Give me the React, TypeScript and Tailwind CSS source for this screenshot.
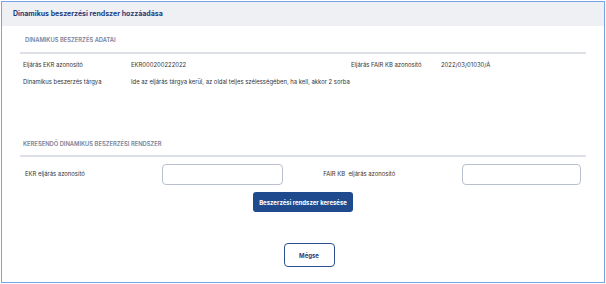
import React from 'react';

const font = { fontFamily: 'Inter, "Noto Sans", sans-serif' };

const App: React.FC = () => {
  return (
    <div className="w-[606px] h-[284px] bg-white p-px" style={font}>
      <div className="h-full border border-[#7aa2e8] bg-white flex flex-col">
        <div className="h-[24px] bg-[#eff0f4] flex items-center px-[11px]">
          <h1 className="text-[7px] font-bold text-[#1f3c7c]">Dinamikus beszerzési rendszer hozzáadása</h1>
        </div>

        <div className="px-[18px]">
          <div className="pt-[10px] pb-[7px] px-[5px] text-[5.8px] font-semibold uppercase text-[#7b8297]">
            Dinamikus beszerzés adatai
          </div>
          <div className="h-[2px] bg-[#dde0e6]" />

          <div className="px-[3px] pt-[3px] text-[5.9px] text-[#333]">
            <div className="flex h-[17px] items-center">
              <div className="w-[108px]">Eljárás EKR azonosító</div>
              <div className="w-[220px]">EKR000200222022</div>
              <div className="w-[90px]">Eljárás FAIR KB azonosító</div>
              <div>2022/03/01030/Á</div>
            </div>
            <div className="flex h-[17px] items-center">
              <div className="w-[108px]">Dinamikus beszerzés tárgya</div>
              <div>Ide az eljárás tárgya kerül, az oldal teljes szélességében, ha kell, akkor 2 sorba</div>
            </div>
          </div>

          <div className="mt-[49px] pb-[7px] px-[3px] text-[5.8px] font-semibold uppercase text-[#7b8297]">
            Keresendő dinamikus beszerzési rendszer
          </div>
          <div className="h-[2px] bg-[#dde0e6]" />

          <div className="flex items-center pt-[7px] px-[5px] text-[5.9px] text-[#333]">
            <div className="w-[139px]">EKR eljárás azonosító</div>
            <div className="w-[122px] h-[21px] rounded-[4px] border border-[#b9bfcc] bg-white" />
            <div className="w-[41px]" />
            <div className="w-[140px]">FAIR KB&nbsp; eljárás azonosító</div>
            <div className="w-[121px] h-[21px] rounded-[4px] border border-[#b9bfcc] bg-white" />
          </div>

          <div className="flex justify-center pt-[7px]">
            <button className="w-[100px] h-[20px] rounded-[3px] bg-[#1f4b8e] text-white text-[6px] font-bold">
              Beszerzési rendszer keresése
            </button>
          </div>

          <div className="flex justify-center pt-[31px]">
            <button className="w-[51px] h-[24px] rounded-[4px] border border-[#2d4f92] bg-white text-[#1f3c7c] text-[6px] font-bold ml-[12px]">
              Mégse
            </button>
          </div>
        </div>
      </div>
    </div>
  );
};

export default App;
